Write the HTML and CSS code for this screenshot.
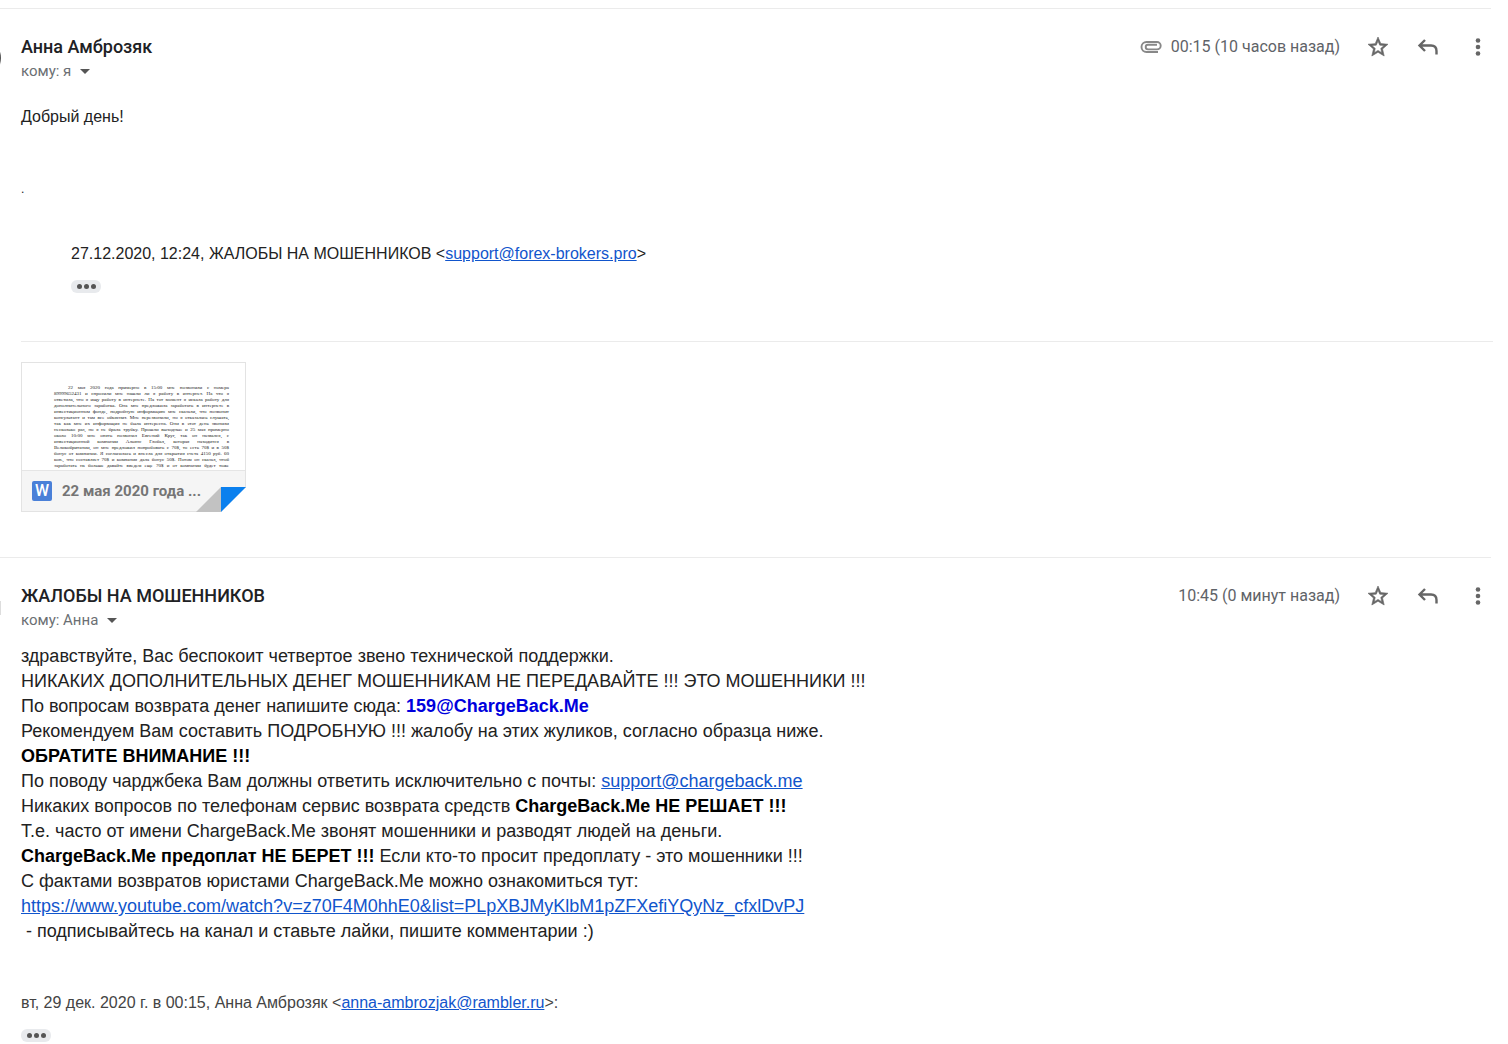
FILE: index.html
```html
<!DOCTYPE html>
<html lang="ru">
<head>
<meta charset="utf-8">
<title>Переписка</title>
<link rel="stylesheet" href="styles.css">
</head>
<body>
<svg width="0" height="0" class="sprite" aria-hidden="true">
  <symbol id="star" viewBox="0 0 24 24"><path d="M22 9.24l-7.19-.62L12 2 9.19 8.63 2 9.24l5.46 4.73L5.82 21 12 17.27 18.18 21l-1.63-7.03L22 9.24zM12 15.4l-3.76 2.27 1-4.28-3.32-2.88 4.38-.38L12 6.1l1.71 4.04 4.38.38-3.32 2.88 1 4.28L12 15.4z" stroke="currentColor" stroke-width=".6"/></symbol>
  <symbol id="reply" viewBox="0 0 24 24"><path d="M4 10.500h11q5.500 0 5.500 5.500v3.500M9 5l-5.500 5.500L9 16" fill="none" stroke="currentColor" stroke-width="2.400"/></symbol>
  <symbol id="more" viewBox="0 0 24 24"><circle cx="12" cy="5.500" r="2.300"/><circle cx="12" cy="12" r="2.300"/><circle cx="12" cy="18.500" r="2.300"/></symbol>
  <symbol id="clip" viewBox="0 0 22 14"><path d="M18 12H6.500a5 5 0 0 1 0-10h10.500a3.600 3.600 0 0 1 0 7.400H8a2.200 2.200 0 0 1 0-4.600h9" fill="none" stroke="currentColor" stroke-width="1.900"/></symbol>
</svg>
<main class="thread">
  <article class="message">
    <div class="avatar"></div>
    <div class="content">
      <header class="head">
        <div>
          <h2 class="sender">Анна Амброзяк</h2>
          <button class="recipient" type="button">кому: я <span class="caret"></span></button>
        </div>
        <div class="tools">
          <svg class="clip"><use href="#clip"/></svg>
          <time class="time">00:15 (10 часов назад)</time>
          <button class="tool" type="button" aria-label="Пометить"><svg class="icon"><use href="#star"/></svg></button>
          <button class="tool" type="button" aria-label="Ответить"><svg class="icon"><use href="#reply"/></svg></button>
          <button class="tool" type="button" aria-label="Ещё"><svg class="icon"><use href="#more"/></svg></button>
        </div>
      </header>
      <div class="letter">
        <p>Добрый день!</p>
        <p class="dot">.</p>
        <blockquote class="quote">
          <p>27.12.2020, 12:24, ЖАЛОБЫ НА МОШЕННИКОВ &lt;<a href="mailto:support@forex-brokers.pro">support@forex-brokers.pro</a>&gt;</p>
          <button class="expand" type="button" aria-label="Показать текст"><i></i><i></i><i></i></button>
        </blockquote>
      </div>
      <section class="attachments">
        <a class="card" href="#doc">
          <div class="preview">
            <div class="indent">22 мая 2020 года примерно в 15:00 мне позвонили с номера</div>
            <div>89999652431 и спросили мне нашли ли я работу в интернет. На что я</div>
            <div>ответила, что я ищу работу в интернете. На тот момент я искала работу для</div>
            <div>дополнительного заработка. Она мне предложила заработать в интернете в</div>
            <div>инвестиционном фонде, подробную информацию мне сказали, что позвонит</div>
            <div>консультант и там все объяснит. Мне перезвонили, но я отказалась слушать,</div>
            <div>так как мне их информация не была интересна. Они в этот день звонили</div>
            <div>несколько раз, но я не брала трубку. Прошли выходные и 25 мая примерно</div>
            <div>около 10:00 мне опять позвонил Евгений Круг, так он назвался, с</div>
            <div>инвестиционной компании Альянс Глобал, которая находится в</div>
            <div>Великобритании, он мне предложил попробовать с 70$, то есть 70$ и в 50$</div>
            <div>бонус от компании. Я согласилась и внесла для открытия счета 4150 руб. 60</div>
            <div>коп., что составляет 70$ и компания дала бонус 50$. Потом он сказал, чтоб</div>
            <div>заработать на больше давайте введем еще 70$ и от компании будет тоже</div>
          </div>
          <div class="caption">
            <span class="word">W</span>
            <span class="filename">22 мая 2020 года ...</span>
          </div>
          <svg class="fold" viewBox="0 0 50 25"><path d="M0 25L25 0v25z" fill="#c2c2c2"/><path d="M25 25L50 0v25z" fill="#fff"/><path d="M25 0h25L25 25z" fill="#0b80ee"/></svg>
        </a>
      </section>
    </div>
  </article>

  <article class="message">
    <div class="avatar pale"></div>
    <div class="content">
      <header class="head">
        <div>
          <h2 class="sender">ЖАЛОБЫ НА МОШЕННИКОВ</h2>
          <button class="recipient" type="button">кому: Анна <span class="caret"></span></button>
        </div>
        <div class="tools">
          <time class="time">10:45 (0 минут назад)</time>
          <button class="tool" type="button" aria-label="Пометить"><svg class="icon"><use href="#star"/></svg></button>
          <button class="tool" type="button" aria-label="Ответить"><svg class="icon"><use href="#reply"/></svg></button>
          <button class="tool" type="button" aria-label="Ещё"><svg class="icon"><use href="#more"/></svg></button>
        </div>
      </header>
      <div class="answer">
        <p>здравствуйте, Вас беспокоит четвертое звено технической поддержки.</p>
        <p>НИКАКИХ ДОПОЛНИТЕЛЬНЫХ ДЕНЕГ МОШЕННИКАМ НЕ ПЕРЕДАВАЙТЕ !!! ЭТО МОШЕННИКИ !!!</p>
        <p>По вопросам возврата денег напишите сюда: <b class="accent">159@ChargeBack.Me</b></p>
        <p>Рекомендуем Вам составить ПОДРОБНУЮ !!! жалобу на этих жуликов, согласно образца ниже.</p>
        <p><b>ОБРАТИТЕ ВНИМАНИЕ !!!</b></p>
        <p>По поводу чарджбека Вам должны ответить исключительно с почты: <a href="mailto:support@chargeback.me">support@chargeback.me</a></p>
        <p>Никаких вопросов по телефонам сервис возврата средств <b>ChargeBack.Me НЕ РЕШАЕТ !!!</b></p>
        <p>Т.е. часто от имени ChargeBack.Me звонят мошенники и разводят людей на деньги.</p>
        <p><b>ChargeBack.Me предоплат НЕ БЕРЕТ !!!</b> Если кто-то просит предоплату - это мошенники !!!</p>
        <p>С фактами возвратов юристами ChargeBack.Me можно ознакомиться тут:</p>
        <p><a href="https://www.youtube.com/watch?v=z70F4M0hhE0&amp;list=PLpXBJMyKlbM1pZFXefiYQyNz_cfxlDvPJ">https://www.youtube.com/watch?v=z70F4M0hhE0&amp;list=PLpXBJMyKlbM1pZFXefiYQyNz_cfxlDvPJ</a></p>
        <p>&nbsp;- подписывайтесь на канал и ставьте лайки, пишите комментарии :)</p>
      </div>
      <div class="history">
        <p>вт, 29 дек. 2020 г. в 00:15, Анна Амброзяк &lt;<a href="mailto:anna-ambrozjak@rambler.ru">anna-ambrozjak@rambler.ru</a>&gt;:</p>
        <button class="expand" type="button" aria-label="Показать текст"><i></i><i></i><i></i></button>
      </div>
    </div>
  </article>
</main>
</body>
</html>
```
FILE: styles.css
```css
* { box-sizing: border-box; }
body { margin: 0; background: #fff; color: #222; font: 16px/24px "Liberation Sans", Arial, sans-serif; }
p, h2, blockquote { margin: 0; }
button { border: 0; padding: 0; background: none; font: inherit; color: inherit; cursor: pointer; }
a { color: #15c; }
.sprite { position: absolute; }

.thread { padding-top: 8px; overflow: hidden; }
.message { display: flex; margin-right: 17px; border-top: 1px solid #ebebeb; padding-top: 26px; }
.avatar { flex: none; width: 40px; height: 40px; margin: 3px 20px 0 -39px; border-radius: 50%; background: #555; }
.avatar.pale { border-radius: 0; height: 14px; margin-top: 17px; background: #ddd; }
.content { flex: 1; min-width: 0; }

.head { display: flex; justify-content: space-between; align-items: flex-start; }
.sender { font: 500 18px/24px Roboto, sans-serif; color: #202124; }
.recipient { display: flex; align-items: center; gap: 9px; font: 15px/24px Roboto, sans-serif; color: #6b6f73; }
.caret { border: 5px solid transparent; border-top-color: #555; border-bottom: 0; }
.tools { display: flex; align-items: center; height: 24px; color: #666; }
.clip { width: 22px; height: 14px; margin-right: 9px; color: #888; }
.time { font: 16px/24px Roboto, sans-serif; color: #5f6368; margin-right: 26px; }
.tool { width: 24px; height: 24px; margin-right: 26px; }
.tool:last-child { margin-right: 1px; }
.icon { display: block; width: 24px; height: 24px; fill: currentColor; }

.letter { margin-top: 22px; }
.dot { margin: 48px 0 41px; font-size: 12px; }
.quote { margin-left: 50px; }
.expand { display: flex; align-items: center; justify-content: center; gap: 2px; width: 30px; height: 13px; margin-top: 14px; border-radius: 6px; background: #e8eaed; }
.expand i { width: 5px; height: 5px; border-radius: 50%; background: #555; }

.attachments { margin: 48px -2px 45px 0; border-top: 1px solid #ebebeb; padding-top: 20px; }
.card { position: relative; display: block; width: 225px; border: 1px solid #e3e3e3; text-decoration: none; }
.preview { height: 107px; padding: 22px 16px 0 32px; overflow: hidden; color: #222; font: 5px/6px "Liberation Serif", serif; }
.preview div { white-space: nowrap; text-align-last: justify; }
.preview .indent { padding-left: 14px; }
.caption { display: flex; align-items: center; gap: 10px; height: 41px; padding-left: 10px; background: #f5f5f5; border-top: 1px solid #e5e5e5; }
.word { width: 20px; height: 20px; border-radius: 2px; background: #4a80d8; color: #fff; font: 500 16px/20px Roboto, sans-serif; text-align: center; }
.filename { font: 700 15px/20px Roboto, sans-serif; color: #757575; }
.fold { position: absolute; right: -1px; bottom: -1px; width: 50px; height: 25px; }

.answer { margin-top: 12px; font-size: 18px; line-height: 25px; }
.answer b { color: #000; }
.answer .accent { color: #00d; }
.history { margin-top: 47px; color: #444; }
```
